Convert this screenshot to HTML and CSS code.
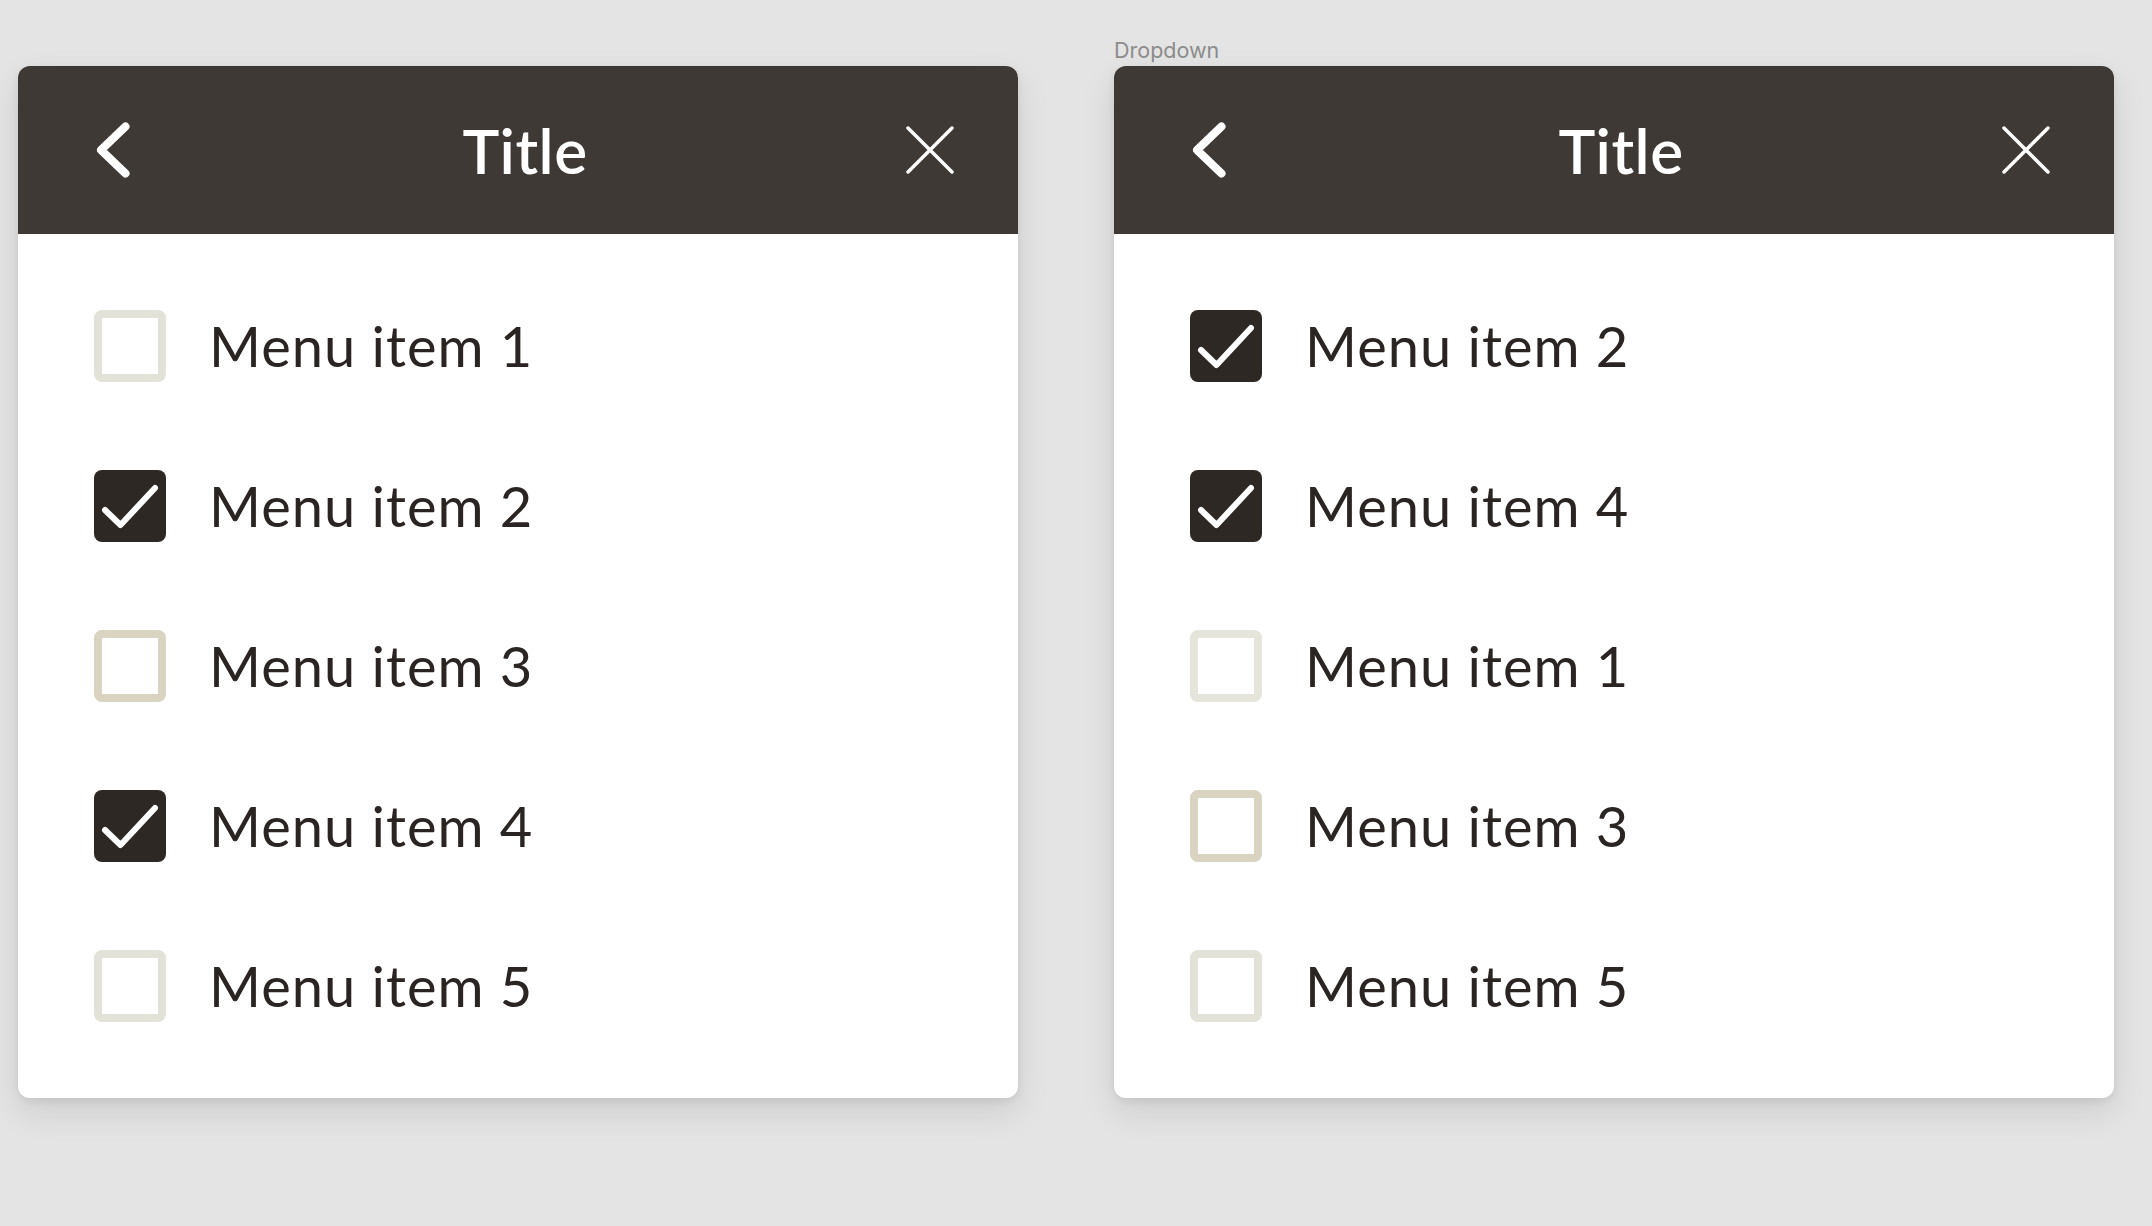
FILE: index.html
```html
<!DOCTYPE html>
<html lang="en">
<head>
<meta charset="utf-8">
<title>Dropdown</title>
<link rel="stylesheet" href="styles.css">
</head>
<body>
<div class="page">
  <section class="frame">
    <div class="frame-label"></div>
    <div class="card">
      <header class="card-head">
        <span class="icon-slot back">
          <svg viewBox="0 0 34 56" width="34" height="56"><path d="M29.5 4.5 L5 28 L29.5 51.5" fill="none" stroke="#fff" stroke-width="8" stroke-linecap="round" stroke-linejoin="round"/></svg>
        </span>
        <h1 class="title">Title</h1>
        <span class="icon-slot close">
          <svg viewBox="0 0 48 48" width="48" height="48"><path d="M2 2 L46 46 M46 2 L2 46" fill="none" stroke="#fff" stroke-width="3.5" stroke-linecap="round"/></svg>
        </span>
      </header>
      <ul class="menu">
        <li class="item"><span class="box light"></span><span class="label">Menu item 1</span></li>
        <li class="item"><span class="box checked"><svg viewBox="0 0 72 72" width="72" height="72"><path d="M11 40 L26.5 55 L61 18" fill="none" stroke="#fff" stroke-width="6" stroke-linecap="round" stroke-linejoin="round"/></svg></span><span class="label">Menu item 2</span></li>
        <li class="item"><span class="box mid"></span><span class="label">Menu item 3</span></li>
        <li class="item"><span class="box checked"><svg viewBox="0 0 72 72" width="72" height="72"><path d="M11 40 L26.5 55 L61 18" fill="none" stroke="#fff" stroke-width="6" stroke-linecap="round" stroke-linejoin="round"/></svg></span><span class="label">Menu item 4</span></li>
        <li class="item"><span class="box light"></span><span class="label">Menu item 5</span></li>
      </ul>
    </div>
  </section>
  <section class="frame">
    <div class="frame-label">Dropdown</div>
    <div class="card">
      <header class="card-head">
        <span class="icon-slot back">
          <svg viewBox="0 0 34 56" width="34" height="56"><path d="M29.5 4.5 L5 28 L29.5 51.5" fill="none" stroke="#fff" stroke-width="8" stroke-linecap="round" stroke-linejoin="round"/></svg>
        </span>
        <h1 class="title">Title</h1>
        <span class="icon-slot close">
          <svg viewBox="0 0 48 48" width="48" height="48"><path d="M2 2 L46 46 M46 2 L2 46" fill="none" stroke="#fff" stroke-width="3.5" stroke-linecap="round"/></svg>
        </span>
      </header>
      <ul class="menu">
        <li class="item"><span class="box checked"><svg viewBox="0 0 72 72" width="72" height="72"><path d="M11 40 L26.5 55 L61 18" fill="none" stroke="#fff" stroke-width="6" stroke-linecap="round" stroke-linejoin="round"/></svg></span><span class="label">Menu item 2</span></li>
        <li class="item"><span class="box checked"><svg viewBox="0 0 72 72" width="72" height="72"><path d="M11 40 L26.5 55 L61 18" fill="none" stroke="#fff" stroke-width="6" stroke-linecap="round" stroke-linejoin="round"/></svg></span><span class="label">Menu item 4</span></li>
        <li class="item"><span class="box lighter"></span><span class="label">Menu item 1</span></li>
        <li class="item"><span class="box mid"></span><span class="label">Menu item 3</span></li>
        <li class="item"><span class="box light"></span><span class="label">Menu item 5</span></li>
      </ul>
    </div>
  </section>
</div>
</body>
</html>
```
FILE: styles.css
```css
html, body {
  margin: 0;
  padding: 0;
}
body {
  background: #e4e4e4;
  font-family: "Lato", "Noto Sans", sans-serif;
  width: 2152px;
  height: 1226px;
  overflow: hidden;
}
.page {
  display: flex;
  gap: 96px;
  padding: 37px 0 0 18px;
}
.frame {
  display: flex;
  flex-direction: column;
  width: 1000px;
}
.frame-label {
  height: 29px;
  line-height: 26px;
  font-family: "Inter", "Liberation Sans", sans-serif;
  font-size: 21.5px;
  color: #8c8c8c;
}
.card {
  background: #fff;
  border-radius: 12px;
  overflow: hidden;
  box-shadow: 0 14px 34px rgba(0, 0, 0, 0.10), 0 3px 8px rgba(0, 0, 0, 0.07);
}
.card-head {
  height: 168px;
  background: #3e3934;
  display: flex;
  align-items: center;
  padding: 0 64px 0 78px;
}
.icon-slot {
  width: 48px;
  height: 56px;
  display: flex;
  align-items: center;
}
.icon-slot.close {
  justify-content: flex-end;
}
.icon-slot svg {
  display: block;
}
.title {
  flex: 1;
  margin: 0;
  text-align: center;
  color: #fff;
  font-size: 62px;
  font-weight: 600;
  line-height: 1;
  letter-spacing: 0.5px;
}
.menu {
  list-style: none;
  margin: 0;
  padding: 32px 0;
}
.item {
  height: 160px;
  display: flex;
  align-items: center;
  padding-left: 76px;
  gap: 43px;
}
.box {
  width: 72px;
  height: 72px;
  box-sizing: border-box;
  border-radius: 8px;
  border: 8px solid #e3e2d8;
  flex: none;
}
.box.lighter {
  border-color: #e6e5dc;
}
.box.mid {
  border-color: #d8d4c1;
}
.box.checked {
  border: none;
  background: #2d2824;
}
.box svg {
  display: block;
}
.label {
  font-size: 56px;
  line-height: 1;
  color: #2a2522;
  font-weight: 400;
  letter-spacing: 1px;
}
```
